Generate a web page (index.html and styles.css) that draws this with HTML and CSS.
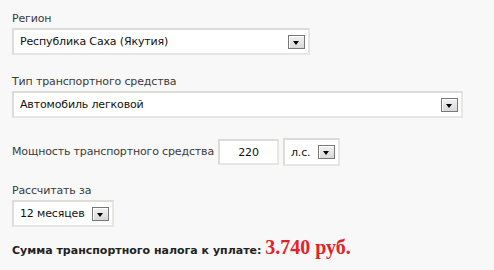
FILE: index.html
```html
<!DOCTYPE html>
<html lang="ru">
<head>
    <meta charset="UTF-8">
    <title>Транспортный налог</title>
    <link rel="stylesheet" href="styles.css">
</head>
<body>
    <div class="calc">
        <div class="field">
            <div class="label">Регион</div>
            <div class="select wide">
                <span class="value">Республика Саха (Якутия)</span>
                <span class="arrow"></span>
            </div>
        </div>

        <div class="field">
            <div class="label">Тип транспортного средства</div>
            <div class="select full">
                <span class="value">Автомобиль легковой</span>
                <span class="arrow"></span>
            </div>
        </div>

        <div class="field row">
            <span class="label inline">Мощность транспортного средства</span>
            <div class="input">220</div>
            <div class="select unit">
                <span class="value">л.с.</span>
                <span class="arrow"></span>
            </div>
        </div>

        <div class="field last">
            <div class="label">Рассчитать за</div>
            <div class="select period">
                <span class="value">12 месяцев</span>
                <span class="arrow"></span>
            </div>
        </div>

        <div class="total">
            Сумма транспортного налога к уплате: <span class="sum">3.740 руб.</span>
        </div>
    </div>
</body>
</html>
```

FILE: styles.css
```css
body {
    margin: 0;
    background-color: #f8f8f8;
    font-family: Tahoma, "DejaVu Sans", Verdana, sans-serif;
    font-size: 11px;
    letter-spacing: -0.15px;
    color: #333;
}

.calc {
    padding: 12px 12px 0 12px;
}

.field {
    margin-bottom: 20px;
}

.field.last {
    margin-bottom: 9px;
}

.label {
    line-height: 14px;
    margin-bottom: 2px;
    color: #3a3a3a;
}

.label.inline {
    margin: 0 4px 0 0;
}

.row {
    display: flex;
    align-items: center;
    margin-bottom: 18px;
}

.select,
.input {
    box-sizing: border-box;
    height: 27px;
    background-color: #fff;
    border: 2px solid #e6e6e2;
    border-top-color: #dcdcd8;
    border-left-color: #dcdcd8;
    display: flex;
    align-items: center;
    color: #111;
}

.select .value {
    flex: 1;
    padding-left: 6px;
    white-space: nowrap;
}

.select .arrow {
    box-sizing: border-box;
    width: 17px;
    height: 14px;
    margin-right: 3px;
    border: 1px solid #777;
    background: linear-gradient(#f2f2f2, #d8d8d8);
    box-shadow: inset 1px 1px 0 #fff;
    position: relative;
}

.select .arrow::after {
    content: "";
    position: absolute;
    left: 4px;
    top: 5px;
    border-left: 3.5px solid transparent;
    border-right: 3.5px solid transparent;
    border-top: 4px solid #000;
}

.wide {
    width: 298px;
}

.full {
    width: 451px;
}

.input {
    width: 61px;
    height: 26px;
    justify-content: center;
    margin-right: 4px;
}

.unit {
    width: 57px;
    height: 28px;
}

.period {
    width: 102px;
}

.total {
    font-weight: bold;
    letter-spacing: 0;
    color: #222;
}

.sum {
    font-family: "Liberation Serif", "Times New Roman", serif;
    font-size: 20px;
    color: #e52128;
}
```
